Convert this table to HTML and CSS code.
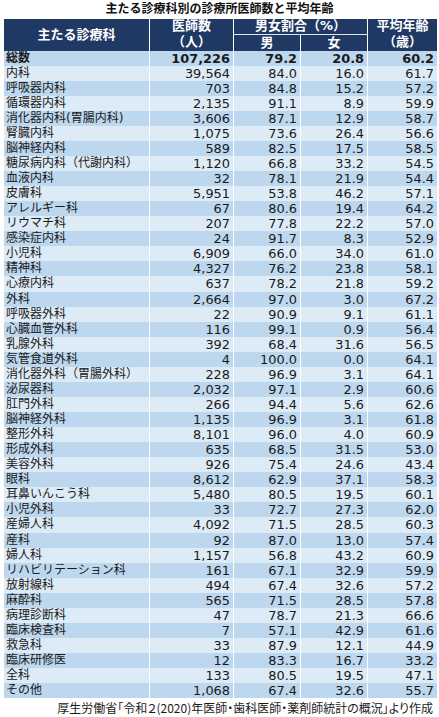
FILE: index.html
```html
<!DOCTYPE html>
<html lang="ja">
<head>
    <meta charset="UTF-8">
    <meta name="viewport" content="width=device-width, initial-scale=1.0">
    <title>主たる診療科別の診療所医師数と平均年齢</title>
    <link rel="stylesheet" href="styles.css">
</head>
<body>
    <h1 class="title">主たる診療科別の診療所医師数と平均年齢</h1>

    <table class="stats">
        <colgroup>
            <col class="c-name">
            <col class="c-count">
            <col class="c-male">
            <col class="c-female">
            <col class="c-age">
        </colgroup>
        <thead>
            <tr class="head-top">
                <th rowspan="2">主たる診療科</th>
                <th>医師数</th>
                <th colspan="2">男女割合（%）</th>
                <th>平均年齢</th>
            </tr>
            <tr class="head-sub">
                <th>（人）</th>
                <th>男</th>
                <th>女</th>
                <th>（歳）</th>
            </tr>
        </thead>
        <tbody>
            <tr class="total"><td>総数</td><td>107,226</td><td>79.2</td><td>20.8</td><td>60.2</td></tr>
            <tr><td>内科</td><td>39,564</td><td>84.0</td><td>16.0</td><td>61.7</td></tr>
            <tr><td>呼吸器内科</td><td>703</td><td>84.8</td><td>15.2</td><td>57.2</td></tr>
            <tr><td>循環器内科</td><td>2,135</td><td>91.1</td><td>8.9</td><td>59.9</td></tr>
            <tr><td>消化器内科(胃腸内科)</td><td>3,606</td><td>87.1</td><td>12.9</td><td>58.7</td></tr>
            <tr><td>腎臓内科</td><td>1,075</td><td>73.6</td><td>26.4</td><td>56.6</td></tr>
            <tr><td>脳神経内科</td><td>589</td><td>82.5</td><td>17.5</td><td>58.5</td></tr>
            <tr><td>糖尿病内科（代謝内科）</td><td>1,120</td><td>66.8</td><td>33.2</td><td>54.5</td></tr>
            <tr><td>血液内科</td><td>32</td><td>78.1</td><td>21.9</td><td>54.4</td></tr>
            <tr><td>皮膚科</td><td>5,951</td><td>53.8</td><td>46.2</td><td>57.1</td></tr>
            <tr><td>アレルギー科</td><td>67</td><td>80.6</td><td>19.4</td><td>64.2</td></tr>
            <tr><td>リウマチ科</td><td>207</td><td>77.8</td><td>22.2</td><td>57.0</td></tr>
            <tr><td>感染症内科</td><td>24</td><td>91.7</td><td>8.3</td><td>52.9</td></tr>
            <tr><td>小児科</td><td>6,909</td><td>66.0</td><td>34.0</td><td>61.0</td></tr>
            <tr><td>精神科</td><td>4,327</td><td>76.2</td><td>23.8</td><td>58.1</td></tr>
            <tr><td>心療内科</td><td>637</td><td>78.2</td><td>21.8</td><td>59.2</td></tr>
            <tr><td>外科</td><td>2,664</td><td>97.0</td><td>3.0</td><td>67.2</td></tr>
            <tr><td>呼吸器外科</td><td>22</td><td>90.9</td><td>9.1</td><td>61.1</td></tr>
            <tr><td>心臓血管外科</td><td>116</td><td>99.1</td><td>0.9</td><td>56.4</td></tr>
            <tr><td>乳腺外科</td><td>392</td><td>68.4</td><td>31.6</td><td>56.5</td></tr>
            <tr><td>気管食道外科</td><td>4</td><td>100.0</td><td>0.0</td><td>64.1</td></tr>
            <tr><td>消化器外科（胃腸外科）</td><td>228</td><td>96.9</td><td>3.1</td><td>64.1</td></tr>
            <tr><td>泌尿器科</td><td>2,032</td><td>97.1</td><td>2.9</td><td>60.6</td></tr>
            <tr><td>肛門外科</td><td>266</td><td>94.4</td><td>5.6</td><td>62.6</td></tr>
            <tr><td>脳神経外科</td><td>1,135</td><td>96.9</td><td>3.1</td><td>61.8</td></tr>
            <tr><td>整形外科</td><td>8,101</td><td>96.0</td><td>4.0</td><td>60.9</td></tr>
            <tr><td>形成外科</td><td>635</td><td>68.5</td><td>31.5</td><td>53.0</td></tr>
            <tr><td>美容外科</td><td>926</td><td>75.4</td><td>24.6</td><td>43.4</td></tr>
            <tr><td>眼科</td><td>8,612</td><td>62.9</td><td>37.1</td><td>58.3</td></tr>
            <tr><td>耳鼻いんこう科</td><td>5,480</td><td>80.5</td><td>19.5</td><td>60.1</td></tr>
            <tr><td>小児外科</td><td>33</td><td>72.7</td><td>27.3</td><td>62.0</td></tr>
            <tr><td>産婦人科</td><td>4,092</td><td>71.5</td><td>28.5</td><td>60.3</td></tr>
            <tr><td>産科</td><td>92</td><td>87.0</td><td>13.0</td><td>57.4</td></tr>
            <tr><td>婦人科</td><td>1,157</td><td>56.8</td><td>43.2</td><td>60.9</td></tr>
            <tr><td>リハビリテーション科</td><td>161</td><td>67.1</td><td>32.9</td><td>59.9</td></tr>
            <tr><td>放射線科</td><td>494</td><td>67.4</td><td>32.6</td><td>57.2</td></tr>
            <tr><td>麻酔科</td><td>565</td><td>71.5</td><td>28.5</td><td>57.8</td></tr>
            <tr><td>病理診断科</td><td>47</td><td>78.7</td><td>21.3</td><td>66.6</td></tr>
            <tr><td>臨床検査科</td><td>7</td><td>57.1</td><td>42.9</td><td>61.6</td></tr>
            <tr><td>救急科</td><td>33</td><td>87.9</td><td>12.1</td><td>44.9</td></tr>
            <tr><td>臨床研修医</td><td>12</td><td>83.3</td><td>16.7</td><td>33.2</td></tr>
            <tr><td>全科</td><td>133</td><td>80.5</td><td>19.5</td><td>47.1</td></tr>
            <tr><td>その他</td><td>1,068</td><td>67.4</td><td>32.6</td><td>55.7</td></tr>
        </tbody>
    </table>

    <p class="source">厚生労働省「令和２(2020)年医師・歯科医師・薬剤師統計の概況」より作成</p>
</body>
</html>
```

FILE: styles.css
```css
body {
    margin: 0;
    width: 439px;
    background: #fff;
    color: #1a1a1a;
    font-family: "DejaVu Sans", "Noto Sans CJK JP", sans-serif;
}
.title {
    margin: 0;
    height: 19px;
    font-size: 12px;
    line-height: 19px;
    font-weight: bold;
    text-align: center;
    color: #111;
}
.stats {
    margin-left: 3px;
    width: 434px;
    table-layout: fixed;
    border-collapse: collapse;
}
.c-name { width: 146px; }
.c-count { width: 84px; }
.c-male { width: 67px; }
.c-female { width: 67px; }
.c-age { width: 70px; }

.stats th {
    padding: 0;
    background-color: #203864;
    color: #fff;
    font-size: 13px;
    font-weight: bold;
    text-align: center;
    border-left: 1px solid #fff;
    border-right: 1px solid #fff;
}
.head-top th {
    height: 14.5px;
    line-height: 14.5px;
}
.head-top th[rowspan] {
    line-height: 30px;
}
.head-top th[colspan] {
    border-bottom: 1px solid #dfe6f0;
}
.head-sub th {
    height: 16px;
    line-height: 16px;
}

.stats td {
    height: 15.07px;
    padding: 0 3px 0 0;
    font-size: 12.9px;
    line-height: 15px;
    text-align: right;
    border-left: 1px solid #fff;
    border-right: 1px solid #fff;
    white-space: nowrap;
}
.stats td:first-child {
    padding: 0 0 0 2px;
    font-size: 12px;
    text-align: left;
}
.stats tbody tr:nth-child(odd) {
    background-color: #bdd7ee;
}
.stats tbody tr:nth-child(even) {
    background-color: #ddebf7;
}
.stats tr.total td {
    font-weight: bold;
}
.source {
    margin: 0;
    padding-right: 6px;
    font-family: "Noto Sans CJK JP", sans-serif;
    font-size: 12px;
    line-height: 19px;
    font-feature-settings: "palt";
    text-align: right;
    color: #1a1a1a;
}
```
